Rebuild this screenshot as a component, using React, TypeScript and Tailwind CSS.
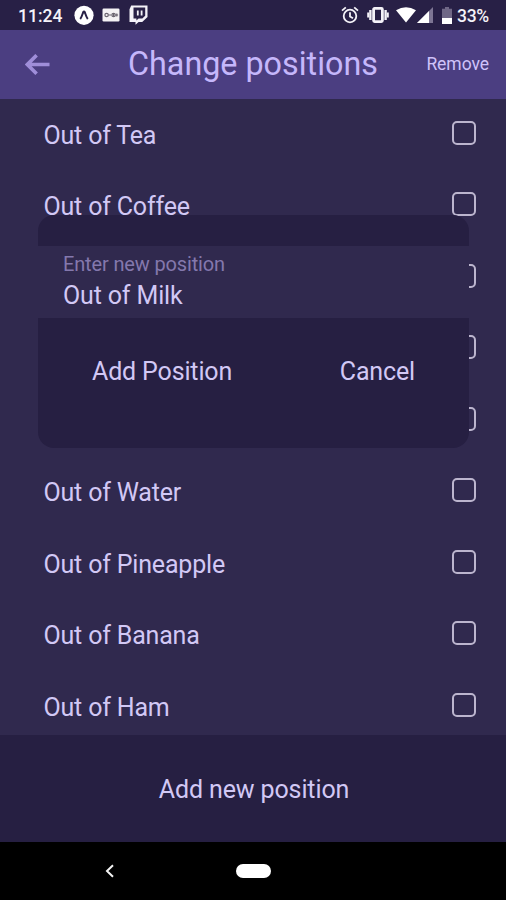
import React from 'react';

// rows without a label sit underneath the dialog, only their checkboxes stick out
const positions = [
  'Out of Tea',
  'Out of Coffee',
  '',
  '',
  '',
  'Out of Water',
  'Out of Pineapple',
  'Out of Banana',
  'Out of Ham',
];

const StatusBar = () => {
  return (
    <div className="flex h-[30px] shrink-0 items-center bg-[#282046] pl-[18px] pr-[16px] text-[17.5px] font-medium text-[#f4f2f8]">
      <span className="w-[44px] whitespace-nowrap pt-[2px]">11:24</span>

      <svg className="ml-[12px] h-5 w-5" viewBox="0 0 20 20">
        <circle cx="10" cy="10.3" r="9.6" fill="#fff" />
        <path d="M6.2 14 C7.8 12.2 8.6 8.6 9.3 7 Q10 5.8 10.7 7 C11.4 8.6 12.2 12.2 13.8 14" fill="none" stroke="#282046" strokeWidth="2" />
      </svg>
      <svg className="ml-[8px] h-[14px] w-[18px]" viewBox="0 0 18 14">
        <rect x="0.5" y="0.5" width="17" height="13" rx="1.2" fill="#f4f2f4" />
        <g fill="none" stroke="#6b6570" strokeWidth="1.2">
          <circle cx="4.6" cy="7" r="1.7" />
          <path d="M6.4 7h3M13.5 7h2.6" />
          <circle cx="11.6" cy="7" r="1.7" />
          <path d="M11.6 5v4M14.8 5.4v3.2" />
        </g>
      </svg>
      <svg className="ml-[9px] h-[20px] w-[19px]" viewBox="0 0 19 20">
        <path d="M2.2 0.5H18.5V12L13.2 17H9.6L6.5 19.8V17H0.5V4.2Z" fill="#f4f2f8" />
        <path d="M4.5 2.6H16.2V10.8L13.3 13.6H9.6L7.4 15.4V13.6H4.5Z" fill="#282046" />
        <path d="M8.8 5.4V10.4M12.6 5.4V10.4" stroke="#f4f2f8" strokeWidth="1.8" />
      </svg>

      <svg className="ml-auto h-[18px] w-[18px]" viewBox="0 0 18 18" fill="none" stroke="#f4f2f8" strokeWidth="1.8">
        <circle cx="9" cy="10" r="6.3" />
        <path d="M9 6.2V10.4L12 12.2M1 4.6L4.8 1.4M17 4.6L13.2 1.4" />
      </svg>
      <svg className="ml-[8px] h-[18px] w-[22px]" viewBox="0 0 22 18">
        <rect x="6.6" y="2.4" width="8.8" height="13.2" rx="1" fill="none" stroke="#f4f2f8" strokeWidth="2.8" />
        <path d="M3.4 4V14M18.6 4V14" stroke="#f4f2f8" strokeWidth="2.4" />
        <path d="M1.2 6.6V11.4M20.8 6.6V11.4" stroke="#f4f2f8" strokeWidth="2" />
      </svg>
      <svg className="ml-[7px] h-[16px] w-[20px]" viewBox="0 0 20 16">
        <path d="M0 3.2Q10 -2.6 20 3.2L10 15.6Z" fill="#fff" />
      </svg>
      <svg className="ml-[1px] h-[16px] w-[16px]" viewBox="0 0 16 16">
        <path d="M0 16L16 0V16Z" fill="#7d7594" />
        <path d="M0 16L12 4V16Z" fill="#fff" />
      </svg>
      <svg className="ml-[9px] h-[17px] w-[10px]" viewBox="0 0 10 17">
        <path d="M0 1.8H3V0H7V1.8H10V17H0Z" fill="#6f6786" />
        <path d="M0 11H10V17H0Z" fill="#fff" />
      </svg>
      <span className="ml-[5px] w-[33px] whitespace-nowrap pt-[2px] text-[17.5px] tracking-[-0.3px]">33%</span>
    </div>
  );
};

const Header = () => {
  return (
    <header className="flex h-[69px] shrink-0 items-center bg-[#4b3e81] pl-[25px] pr-[17px] text-[#c5b7fb]">
      <svg className="h-[22px] w-[25px]" viewBox="0 0 25 22" fill="none" stroke="#9f8ed9" strokeWidth="3.6">
        <path d="M24.5 10.5H2.5M11.6 1.2L2.4 10.5L11.6 19.8" />
      </svg>
      <h1 className="ml-[78px] whitespace-nowrap text-[32.3px] leading-none">Change positions</h1>
      <button className="ml-auto whitespace-nowrap pt-[1px] text-[17.5px] leading-none tracking-[-0.05px] text-[#cfc3fa]">Remove</button>
    </header>
  );
};

const PositionRow = ({ label }: { label: string }) => {
  return (
    <li className="flex h-[71.5px] shrink-0 items-center justify-between pl-[43.5px] pr-[30px]">
      <span className="pt-[5px] text-[25px] leading-none tracking-[-0.18px]">{label}</span>
      <span className="h-[24px] w-[24px] rounded-[5px] border-2 border-[#bcb5ce]" />
    </li>
  );
};

const AddPositionDialog = () => {
  return (
    <div className="absolute left-[38px] top-[215px] flex h-[233px] w-[431px] flex-col overflow-hidden rounded-[16px] bg-[#261f42] pt-[31px]">
      <div className="flex h-[72px] flex-col bg-[#30294e] pl-[25px] pt-[7px]">
        <span className="text-[20px] leading-[22px] tracking-[-0.15px] text-[#8478ad]">Enter new position</span>
        <span className="mt-[7px] text-[25px] leading-[28px] tracking-[-0.15px]">Out of Milk</span>
      </div>
      <div className="flex justify-between pl-[54px] pr-[54px] pt-[40px] text-[25px] leading-[28px] tracking-[-0.15px]">
        <button>Add Position</button>
        <button>Cancel</button>
      </div>
    </div>
  );
};

const NavigationBar = () => {
  return (
    <div className="flex h-[58px] shrink-0 items-center bg-black pl-[105px]">
      <svg className="h-[14px] w-[9px]" viewBox="0 0 9 14" fill="none" stroke="#f4f4f4" strokeWidth="2">
        <path d="M8 1.2L2 7L8 12.8" />
      </svg>
      <div className="ml-[122px] h-[14px] w-[35px] rounded-full bg-white" />
    </div>
  );
};

const App = () => {
  return (
    <div className="relative flex h-[900px] w-[506px] flex-col overflow-hidden bg-[#30294e] font-['Roboto',sans-serif] text-[#d2c8f5]">
      <StatusBar />
      <Header />
      <div className="min-h-0 flex-1 overflow-hidden">
        <ul className="-mt-[2px] flex flex-col">
          {positions.map((label, index) => (
            <PositionRow key={index} label={label} />
          ))}
        </ul>
      </div>
      <button className="h-[107px] shrink-0 bg-[#261f42] pl-[2px] pt-[2px] text-[25px] tracking-[-0.12px]">Add new position</button>
      <NavigationBar />
      <AddPositionDialog />
    </div>
  );
};

export default App;
